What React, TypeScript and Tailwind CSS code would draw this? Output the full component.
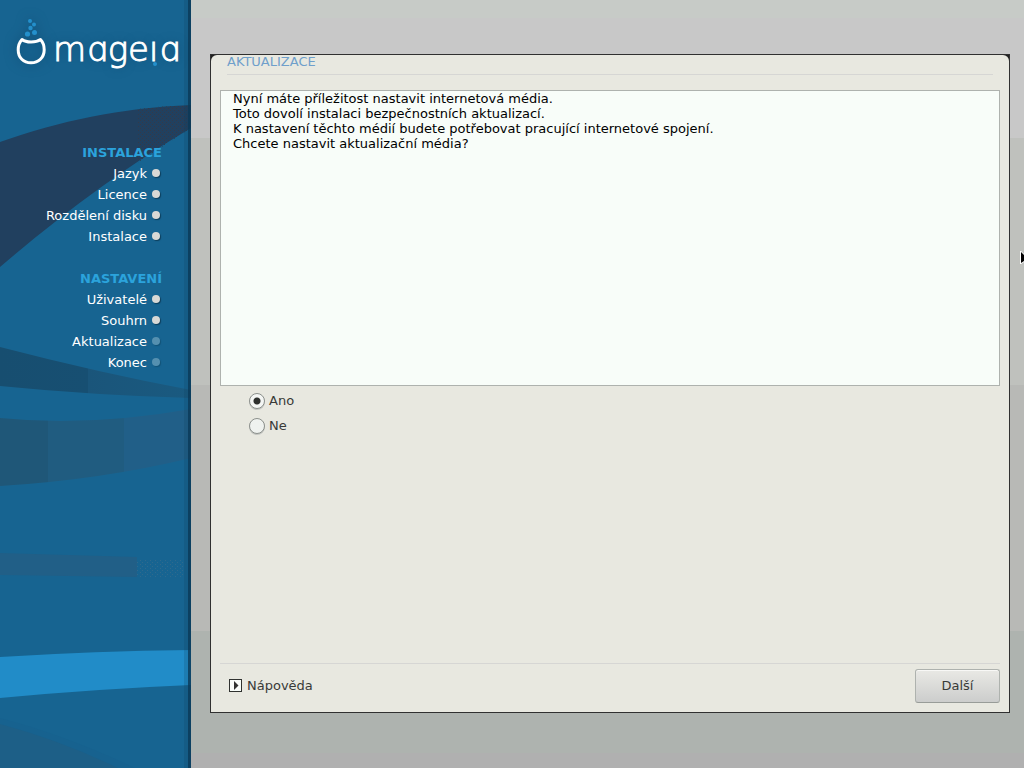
import { useState } from "react";

type Step = { label: string; done: boolean };

const SECTIONS: { title: string; steps: Step[] }[] = [
  {
    title: "INSTALACE",
    steps: [
      { label: "Jazyk", done: true },
      { label: "Licence", done: true },
      { label: "Rozdělení disku", done: true },
      { label: "Instalace", done: true },
    ],
  },
  {
    title: "NASTAVENÍ",
    steps: [
      { label: "Uživatelé", done: true },
      { label: "Souhrn", done: true },
      { label: "Aktualizace", done: false },
      { label: "Konec", done: false },
    ],
  },
];

const MESSAGE = [
  "Nyní máte příležitost nastavit internetová média.",
  "Toto dovolí instalaci bezpečnostních aktualizací.",
  "K nastavení těchto médií budete potřebovat pracující internetové spojení.",
  "Chcete nastavit aktualizační média?",
];

export default function App() {
  const [choice, setChoice] = useState("Ano");

  return (
    <div className="relative flex min-h-screen overflow-hidden font-['DejaVu_Sans',sans-serif] text-[13px] leading-[15px]">
      <Sidebar />

      <main className="flex min-w-0 flex-1 flex-col bg-[linear-gradient(#c7cbc7_0_2.4%,#c8c8c8_2.4%_18%,#bfc1bd_18%_50.1%,#b8b9b6_50.1%_82.1%,#aeb3af_82.1%_98%,#b0b0b0_98%)] pt-[54px] pr-[14px] pb-[55px] pl-[19px]">
        <section className="flex flex-1 flex-col border border-[#303030] bg-[#202020]">
          <div className="flex flex-1 flex-col rounded-t-md bg-[#e8e8e0] px-[9px] pb-[9px]">
            <h1 className="mx-[7px] h-5 border-[#d6d6d4] border-b text-[#6f9fcb] leading-[13px]">
              AKTUALIZACE
            </h1>

            <div className="mt-[15px] min-h-[296px] border border-[#aeb2ae] bg-[#f8fdf9] px-3 text-black">
              {MESSAGE.map((line) => (
                <p key={line}>{line}</p>
              ))}
            </div>

            <form className="mt-[5px] ml-[29px] flex flex-col gap-[5px] text-[#383a38]">
              <Choice value="Ano" current={choice} onSelect={setChoice} />
              <Choice value="Ne" current={choice} onSelect={setChoice} />
            </form>

            <footer className="mt-auto flex items-center justify-between border-[#d6d6d4] border-t pt-[5px] text-[#383a38]">
              <button type="button" className="ml-[9px] flex items-center gap-[5px] pb-[2px]">
                <svg width="13" height="13" viewBox="0 0 13 13" aria-hidden="true">
                  <rect x=".5" y=".5" width="12" height="12" fill="#f8fdf9" stroke="#303230" />
                  <path d="M5 2v9l4.500-4.500z" fill="#303230" />
                </svg>
                Nápověda
              </button>

              <button
                type="button"
                className="h-[34px] w-[85px] rounded-[3px] border border-[#aeb2ae] border-b-[#989c98] bg-linear-to-b from-[#e9e9e5] to-[#cccdcc] pb-[2px] shadow-[inset_0_1px_0_#f8f8f6]"
              >
                Další
              </button>
            </footer>
          </div>
        </section>
      </main>

      <svg
        className="absolute top-[251px] right-0"
        width="4"
        height="14"
        viewBox="0 0 4 14"
        aria-hidden="true"
      >
        <path d="M0 0h1l3 3v8l-3 2h-1z" fill="#fff" />
        <path d="M1 1l3 3v6l-3 2z" fill="#000" />
      </svg>
    </div>
  );
}

function Choice({
  value,
  current,
  onSelect,
}: {
  value: string;
  current: string;
  onSelect(value: string): void;
}) {
  return (
    <label className="flex h-5 items-center gap-1 self-start">
      <input
        type="radio"
        name="media"
        value={value}
        checked={current === value}
        onChange={() => onSelect(value)}
        className="h-4 w-4 appearance-none rounded-full border border-[#8c908c] bg-[#eff2ef] shadow-[0_1px_0_#c4c6c2] checked:bg-[radial-gradient(circle,#2e302e_0_3px,#f4f6f4_4px)]"
      />
      <span className="pb-[2px]">{value}</span>
    </label>
  );
}

function Sidebar() {
  return (
    <aside className="relative w-[191px] shrink-0 bg-[#176491]">
      <Waves />

      <div className="relative">
        <Logo />

        <nav className="flex flex-col gap-[21px] text-right">
          {SECTIONS.map((section) => (
            <div key={section.title}>
              <h2 className="pr-[29px] font-bold text-[#2ba3dc] leading-[21px]">
                {section.title}
              </h2>

              <ul className="pr-[31px]">
                {section.steps.map((step) => (
                  <li
                    key={step.label}
                    className="flex items-center justify-end gap-[5px] text-white leading-[21px]"
                  >
                    {step.label}
                    <span
                      className={
                        step.done
                          ? "mb-[2px] h-2 w-2 rounded-full bg-[#d9d9d6] shadow-[1px_1px_1px_#0d3e5c]"
                          : "mb-[2px] h-2 w-2 rounded-full bg-[#5590b0] shadow-[1px_1px_1px_#125378]"
                      }
                    />
                  </li>
                ))}
              </ul>
            </div>
          ))}
        </nav>
      </div>
    </aside>
  );
}

function Logo() {
  return (
    <div className="flex h-[142px] items-start pt-[18px] pl-[15px]">
      <svg
        className="shrink-0 overflow-visible drop-shadow-[0_0_6px_#0f4a70]"
        width="32"
        height="47"
        viewBox="0 0 32 47"
        fill="none"
        aria-hidden="true"
      >
        <g fill="#2490cc">
          <circle cx="15" cy="3" r="2" />
          <circle cx="19" cy="6.500" r="2" />
          <circle cx="15.500" cy="10" r="2.200" />
          <circle cx="12.500" cy="16" r="2.600" />
          <circle cx="19.500" cy="14.500" r="2.500" />
        </g>
        <path
          d="M7 21.500c4 3.300 14 3.300 18.500 0c2.300 2.500 3.700 6 3.700 10.200c0 8-5.700 13.100-13.200 13.100S3.200 39.700 3.200 31.700c0-4.200 1.500-7.700 3.800-10.200z"
          stroke="#fff"
          strokeWidth="3"
          strokeLinejoin="round"
        />
      </svg>

      <span
        role="img"
        aria-label="mageia"
        className="relative ml-[6px] pt-[11px] font-['DejaVu_Sans_Light','DejaVu_Sans',sans-serif] font-extralight text-[34px] text-white leading-10 [-webkit-text-stroke:1px_white] [text-shadow:0_0_10px_#0f4a70]"
      >
        mɑgeıɑ
        <span className="absolute right-[23px] bottom-[3px] h-1 w-1 rounded-full bg-[#2490cc]" />
      </span>
    </div>
  );
}

// Curved bands behind the step list, with the shaded edge on the right
function Waves() {
  return (
    <svg
      className="absolute inset-0 h-full w-full"
      viewBox="0 0 191 768"
      preserveAspectRatio="none"
      aria-hidden="true"
    >
      <defs>
        <linearGradient id="band">
          <stop offset="0" stopColor="#174e70" />
          <stop offset=".46" stopColor="#174f72" />
          <stop offset=".46" stopColor="#1a557a" />
          <stop offset="1" stopColor="#1a5a80" />
        </linearGradient>
        <linearGradient id="wide">
          <stop offset=".25" stopColor="#1f5778" />
          <stop offset=".25" stopColor="#205c80" />
          <stop offset=".65" stopColor="#205c80" />
          <stop offset=".65" stopColor="#215f88" />
        </linearGradient>
        <pattern id="grain" width="4" height="4" patternUnits="userSpaceOnUse">
          <path d="M0 0h1v1H0zM2 2h1v1H2z" fill="#333a4a" />
        </pattern>
        <pattern id="dots" width="5" height="4" patternUnits="userSpaceOnUse">
          <path d="M0 0h1v1H0zM2 2h1v1H2z" fill="#2e6a8e" />
        </pattern>
      </defs>
      <path d="M0 142C60 121 120 108 191 105V128C125 167 62 214 0 267z" fill="#21405f" />
      <path d="M137 109Q165 106 191 105V128L137 163z" fill="url(#grain)" />
      <path d="M0 347Q100 373 191 390V398Q90 395 0 386z" fill="url(#band)" />
      <path d="M0 418Q90 427 191 409V458Q100 480 0 486z" fill="url(#wide)" />
      <path d="M0 553L137 557V577L0 575z" fill="#215f87" />
      <path d="M137 559H183V577H137z" fill="url(#dots)" />
      <path d="M0 657Q95 651 191 650V685Q95 689 0 698z" fill="#218cc8" />
      <path d="M0 718Q65 735 135 768H0z" fill="#17628f" />
      <path d="M0 724Q60 740 118 768H0z" fill="#1d5f87" />
      <path d="M184 0h4v768h-4z" fill="#0d3e5c" opacity=".2" />
      <path d="M188 0h3v768h-3z" fill="#0b3a58" opacity=".85" />
    </svg>
  );
}
